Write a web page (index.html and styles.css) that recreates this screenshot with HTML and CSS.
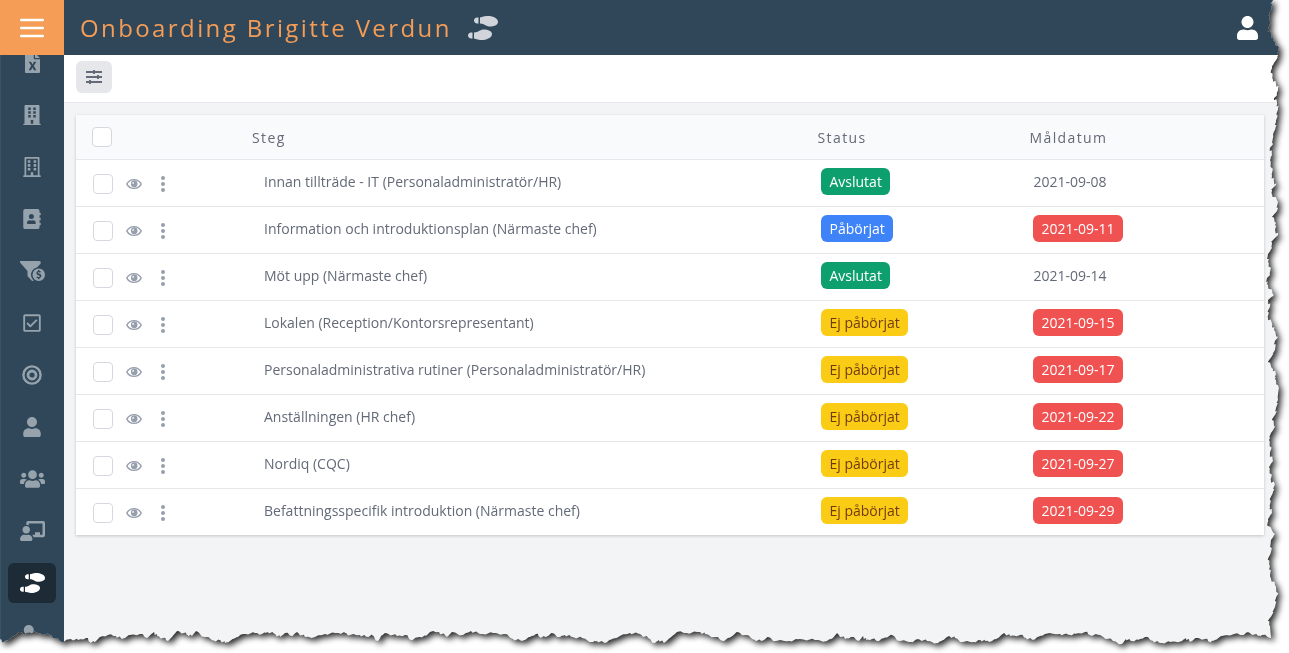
FILE: index.html
```html
<!DOCTYPE html>
<html lang="sv">
<head>
<meta charset="utf-8">
<title>Onboarding Brigitte Verdun</title>
<link rel="stylesheet" href="styles.css">
</head>
<body>
<svg class="defs" aria-hidden="true">
  <symbol id="shoes" viewBox="0 0 640 512"><path d="M192 160h32V32h-32c-35.35 0-64 28.65-64 64s28.65 64 64 64zM0 416c0 35.35 28.65 64 64 64h32V352H64c-35.35 0-64 28.65-64 64zm337.46-128c-34.91 0-76.16 13.12-104.73 32-24.79 16.38-44.52 32-104.73 32v128l57.53 15.97c26.21 7.28 53.01 13.12 80.31 15.05 32.69 2.31 65.6.67 97.58-6.2C472.9 481.3 512 429.22 512 384c0-64-84.18-96-174.54-96zM491.42 7.25C459.44.38 426.53-1.26 393.84 1.05c-27.3 1.93-54.1 7.77-80.31 15.05L256 32v128c60.2 0 79.94 15.62 104.73 32 28.57 18.88 69.82 32 104.73 32C555.82 224 640 192 640 128c0-45.22-39.1-97.3-148.58-120.75z"/></symbol>
  <symbol id="user" viewBox="0 0 448 512"><path d="M224 256c70.7 0 128-57.3 128-128S294.7 0 224 0 96 57.3 96 128s57.3 128 128 128zm89.6 32h-16.7c-22.2 10.2-46.9 16-72.9 16s-50.6-5.8-72.9-16h-16.7C60.2 288 0 348.2 0 422.4V464c0 26.5 21.5 48 48 48h352c26.5 0 48-21.5 48-48v-41.6c0-74.2-60.2-134.4-134.4-134.4z"/></symbol>
  <symbol id="eye" viewBox="0 0 576 512"><path fill-rule="evenodd" d="M572 241C518 135 410 72 288 72S58 135 4 241a32 32 0 0 0 0 30c54 106 162 169 284 169s230-63 284-169a32 32 0 0 0 0-30zM288 392c-98 0-184-50-234-136C104 170 190 120 288 120s184 50 234 136c-50 86-136 136-234 136zM296 128a122 122 0 1 0 0 244 122 122 0 0 0 0-244zM256 180a34 34 0 1 1-34 44 50 50 0 0 1 34-44z"/></symbol>
</svg>
<div class="sheet">
  <div class="page" id="page">
    <header class="topbar">
      <button class="menu" aria-label="Meny"><svg width="24" height="20" viewBox="0 0 24 20"><path d="M1 2h22M1 10h22M1 18h22" stroke="#fff" stroke-width="2.4" stroke-linecap="round"/></svg></button>
      <h1 class="title">Onboarding Brigitte Verdun</h1>
      <svg class="title-icon" width="30" height="24"><use href="#shoes"/></svg>
      <button class="account" aria-label="Konto"><svg width="21" height="24"><use href="#user"/></svg></button>
    </header>
    <div class="body">
      <nav class="sidebar" aria-label="Huvudmeny">
        <div class="items">
          <a class="item" href="#" aria-label="Export"><svg width="15" height="20" viewBox="0 0 384 512"><path fill-rule="evenodd" d="M224 136V0H24A24 24 0 0 0 0 24v464a24 24 0 0 0 24 24h336a24 24 0 0 0 24-24V160H248a24 24 0 0 1-24-24zM256 0v128h128zM95 224h58l39 68 39-68h58l-64 104 64 112h-58l-39-70-39 70H95l64-112z"/></svg></a>
          <a class="item" href="#" aria-label="Bolag"><svg width="18" height="20" viewBox="0 0 448 512"><path fill-rule="evenodd" d="M436 480h-20V24a24 24 0 0 0-24-24H56a24 24 0 0 0-24 24v456H12a12 12 0 0 0-12 12v20h448v-20a12 12 0 0 0-12-12zM128 64h64v64h-64zm0 96h64v64h-64zm0 96h64v64h-64zM256 64h64v64h-64zm0 96h64v64h-64zm0 96h64v64h-64zM192 384h64v96h-64z"/></svg></a>
          <a class="item" href="#" aria-label="Kontor"><svg width="18" height="20" viewBox="0 0 448 512"><path fill-rule="evenodd" d="M436 470h-20V24a24 24 0 0 0-24-24H56a24 24 0 0 0-24 24v446H12a12 12 0 0 0-12 12v30h448v-30a12 12 0 0 0-12-12zM76 44h296v426H256v-80h-64v80H76z"/><path d="M116 84h66v66h-66zm0 98h66v66h-66zm0 98h66v66h-66zM266 84h66v66h-66zm0 98h66v66h-66zm0 98h66v66h-66z"/></svg></a>
          <a class="item" href="#" aria-label="Kontakter"><svg width="18" height="20" viewBox="0 0 448 512"><path fill-rule="evenodd" d="M436 160a12 12 0 0 0 12-12v-40a12 12 0 0 0-12-12h-20V48a48 48 0 0 0-48-48H48A48 48 0 0 0 0 48v416a48 48 0 0 0 48 48h320a48 48 0 0 0 48-48v-48h20a12 12 0 0 0 12-12v-40a12 12 0 0 0-12-12h-20v-64h20a12 12 0 0 0 12-12v-40a12 12 0 0 0-12-12h-20v-64zM208 128a64 64 0 1 1 0 128 64 64 0 0 1 0-128zm112 237c0 10-10 19-22 19H118c-12 0-22-9-22-19v-19c0-32 30-58 67-58h5c28 11 52 11 80 0h5c37 0 67 26 67 58z"/></svg></a>
          <a class="item" href="#" aria-label="Försäljning"><svg width="25" height="20" viewBox="0 0 640 512"><path d="M433 166l87-91C547 47 527 0 488 0H24C-6 0-10 24 6 44l186 212v124a32 32 0 0 0 14 26l98 98c14 12 34 10 46-4a192 192 0 0 1 83-334z"/><path fill-rule="evenodd" d="M480 192a160 160 0 1 0 0 320 160 160 0 0 0 0-320zm-18 40h36v24c16 2 28 7 40 15l-20 28c-15-11-58-19-61 3-2 26 91 14 91 78 0 34-22 54-50 60v26h-36v-25c-18-2-34-9-47-20l22-27c19 17 70 23 73-2 4-32-90-17-90-78 0-28 17-50 42-57z"/></svg></a>
          <a class="item" href="#" aria-label="Uppgifter"><svg width="18" height="20" viewBox="0 0 448 512"><path fill-rule="evenodd" d="M400 32H48A48 48 0 0 0 0 80v352a48 48 0 0 0 48 48h352a48 48 0 0 0 48-48V80a48 48 0 0 0-48-48zm0 400H48V80h352zM364 191L191 363a16 16 0 0 1-20 0l-89-91 34-34 65 66 149-147z"/></svg></a>
          <a class="item" href="#" aria-label="Mål"><svg width="20" height="20" viewBox="0 0 20 20"><circle cx="10" cy="10" r="8.6" fill="none" stroke="currentColor" stroke-width="2.4"/><circle cx="10" cy="10" r="4" fill="none" stroke="currentColor" stroke-width="2.8"/></svg></a>
          <a class="item" href="#" aria-label="Person"><svg width="18" height="20"><use href="#user"/></svg></a>
          <a class="item" href="#" aria-label="Grupper"><svg width="25" height="20" viewBox="0 0 640 512"><path d="M96 224c35.3 0 64-28.7 64-64s-28.7-64-64-64-64 28.7-64 64 28.7 64 64 64zm448 0c35.3 0 64-28.7 64-64s-28.7-64-64-64-64 28.7-64 64 28.7 64 64 64zm32 32h-64c-17.6 0-33.5 7.1-45.1 18.6 40.3 22.1 68.9 62 75.1 109.4h66c17.7 0 32-14.3 32-32v-32c0-35.3-28.7-64-64-64zm-256 0c61.9 0 112-50.1 112-112S381.9 32 320 32 208 82.1 208 144s50.1 112 112 112zm76.8 32h-8.3c-20.8 10-43.9 16-68.5 16s-47.6-6-68.5-16h-8.3C179.6 288 128 339.6 128 403.2V432c0 26.5 21.5 48 48 48h288c26.5 0 48-21.5 48-48v-28.8c0-63.6-51.6-115.2-115.2-115.2zm-223.7-13.4C161.5 263.1 145.6 256 128 256H64c-35.3 0-64 28.7-64 64v32c0 17.7 14.3 32 32 32h65.9c6.3-47.4 34.9-87.3 75.2-109.4z"/></svg></a>
          <a class="item" href="#" aria-label="Utbildning"><svg width="25" height="20" viewBox="0 0 640 512"><path d="M208 352c-2.39 0-4.78.35-7.06 1.09C187.98 357.3 174.35 360 160 360c-14.35 0-27.98-2.7-40.95-6.91-2.28-.74-4.66-1.09-7.05-1.09C49.94 352-.33 402.48 0 464.62.14 490.88 21.73 512 48 512h224c26.27 0 47.86-21.12 48-47.38.33-62.14-49.94-112.62-112-112.62zm-48-32c53.02 0 96-42.98 96-96s-42.98-96-96-96-96 42.98-96 96 42.98 96 96 96zM592 0H208c-26.47 0-48 22.25-48 49.59V96c23.42 0 45.1 6.78 64 17.8V64h352v288h-64v-64H384v64h-76.24c19.1 16.69 33.12 38.73 39.69 64H592c26.47 0 48-22.25 48-49.59V49.59C640 22.25 618.47 0 592 0z"/></svg></a>
          <a class="item active" href="#" aria-label="Onboarding" aria-current="page"><svg width="25" height="20"><use href="#shoes"/></svg></a>
          <a class="item" href="#" aria-label="Roller"><svg width="25" height="20" viewBox="0 0 640 512"><circle cx="224" cy="128" r="128"/></svg></a>
        </div>
      </nav>
      <main class="content">
        <div class="toolbar">
          <button class="filter" aria-label="Filter"><svg width="16" height="14" viewBox="0 0 16 14"><path d="M0 2h16M0 7h16M0 12h16M8 0v4M12 5v4M4 10v4" fill="none" stroke="currentColor" stroke-width="1.9"/></svg></button>
        </div>
        <div class="list">
          <table class="table">
            <colgroup><col class="c-tools"><col class="c-step"><col class="c-status"><col></colgroup>
            <thead><tr><th><input class="check" type="checkbox" aria-label="Markera alla"></th><th>Steg</th><th>Status</th><th>Måldatum</th></tr></thead>
            <tbody id="rows"></tbody>
          </table>
        </div>
      </main>
    </div>
  </div>
</div>
<script src="app.js"></script>
</body>
</html>
```
FILE: styles.css
```css
* { box-sizing: border-box; }
body {
  margin: 0;
  background: #fff;
  color: #636a78;
  font-family: "Open Sans", "Noto Sans", sans-serif;
  font-size: 14px;
  line-height: 19px;
  overflow: hidden;
}
button { border: 0; padding: 0; background: none; color: inherit; font: inherit; cursor: pointer; display: flex; align-items: center; justify-content: center; }
svg { display: block; fill: currentColor; }
.defs { display: none; }

.sheet { filter: drop-shadow(3px 3px 3px rgba(0, 0, 0, 0.85)); }
.page { height: 100vh; display: flex; flex-direction: column; background: #f3f4f6; }

.topbar { flex: none; height: 55px; display: flex; align-items: center; background: #2f4759; padding-right: 31px; }
.menu { width: 64px; height: 55px; background: #f59c56; }
.title { margin: 0 16px; font-size: 24px; line-height: 34px; font-weight: 400; letter-spacing: 0.1em; color: #f59c56; white-space: nowrap; }
.title-icon { color: #d1d5db; }
.account { margin-left: auto; color: #fff; }

.body { flex: 1; min-height: 0; display: flex; }
.sidebar { flex: none; width: 64px; overflow: hidden; background: #2f4759; border-left: 1px solid #3c5364; }
.items { display: flex; flex-direction: column; gap: 12px; padding: 0 8px 0 7px; margin-top: -12px; }
.item { flex: none; height: 40px; display: flex; align-items: center; justify-content: center; border-radius: 6px; color: #97a3ac; }
.item.active { background: #1c2b35; color: #fff; }

.content { flex: 1; min-width: 0; }
.toolbar { height: 48px; padding: 6px 12px; background: #fff; border-bottom: 1px solid #e5e7eb; }
.filter { width: 36px; height: 32px; border-radius: 6px; background: #e5e7eb; }
.list { padding: 12px 25px 0 12px; }

.table { width: 100%; table-layout: fixed; border-collapse: separate; border-spacing: 0; background: #fff; box-shadow: 0 1px 3px rgba(0, 0, 0, 0.2); }
.c-tools { width: 160px; }
.c-step { width: 47.6%; }
.c-status { width: 212px; }
th { height: 45px; padding: 0 16px; text-align: left; font-weight: 400; letter-spacing: 0.1em; background: #f9fafb; border-bottom: 1px solid #e5e7eb; vertical-align: middle; }
td { height: 47px; padding: 8px 20px 0; vertical-align: top; border-bottom: 1px solid #e5e7eb; }
td:first-child { padding: 14px 0 0 17px; }
td:nth-child(2) { padding-left: 28px; }
tbody tr:last-child td { border-bottom: 0; height: 46px; }
.plain { display: inline-block; padding: 4px 0; }
.badge { display: inline-block; padding: 4px 8px; border-radius: 6px; color: #fff; }
.done { background: #0e9f6e; }
.started { background: #3f83f8; }
.waiting { background: #facc15; color: #713b12; }
.late { background: #f05252; }

.tools { display: flex; align-items: center; gap: 13px; color: #979fad; }
.check { appearance: none; display: block; flex: none; width: 20px; height: 20px; margin: 0; border: 1px solid #d5d9df; border-radius: 4px; background: #fff; }
.dots { width: 16px; }
```
FILE: app.js
```js
const steps = [
  ["Innan tillträde - IT (Personaladministratör/HR)", "Avslutat", "done", "2021-09-08", false],
  ["Information och introduktionsplan (Närmaste chef)", "Påbörjat", "started", "2021-09-11", true],
  ["Möt upp (Närmaste chef)", "Avslutat", "done", "2021-09-14", false],
  ["Lokalen (Reception/Kontorsrepresentant)", "Ej påbörjat", "waiting", "2021-09-15", true],
  ["Personaladministrativa rutiner (Personaladministratör/HR)", "Ej påbörjat", "waiting", "2021-09-17", true],
  ["Anställningen (HR chef)", "Ej påbörjat", "waiting", "2021-09-22", true],
  ["Nordiq (CQC)", "Ej påbörjat", "waiting", "2021-09-27", true],
  ["Befattningsspecifik introduktion (Närmaste chef)", "Ej påbörjat", "waiting", "2021-09-29", true]
];
document.getElementById("rows").innerHTML = steps.map(([name, status, kind, date, late]) => `
<tr>
  <td><div class="tools"><input class="check" type="checkbox" aria-label="Markera ${name}">
    <button aria-label="Visa"><svg width="16" height="14"><use href="#eye"/></svg></button>
    <button class="dots" aria-label="Fler val"><svg width="4" height="16" viewBox="0 0 4 16"><circle cx="2" cy="2" r="2"/><circle cx="2" cy="8" r="2"/><circle cx="2" cy="14" r="2"/></svg></button></div></td>
  <td><span class="plain">${name}</span></td>
  <td><span class="badge ${kind}">${status}</span></td>
  <td><span class="${late ? "badge late" : "plain"}">${date}</span></td>
</tr>`).join("");

// Torn paper outline: [distance from the right edge, y] and [x, distance from the bottom edge].
const right = [[16,0],[18,4],[17,8],[19,12],[20,18],[19,22],[21,30],[18,33],[16,40],[11,46],[11,55],[13,60],[17,66],[18,73],[16,80],[13,84],[11,88],[12,95],[15,98],[12,103],[11,108],[12,115],[13,122],[14,130],[16,134],[16,144],[19,148],[17,155],[19,160],[17,168],[17,176],[15,182],[13,185],[18,190],[17,194],[11,202],[12,211],[17,217],[13,223],[14,230],[11,235],[18,242],[17,248],[21,254],[21,262],[19,267],[19,275],[22,278],[22,284],[19,289],[15,295],[21,300],[19,306],[21,312],[21,318],[17,323],[15,330],[11,337],[14,341],[14,350],[17,356],[21,362],[16,369],[13,374],[14,379],[11,385],[11,400],[13,408],[13,413],[17,420],[14,427],[18,433],[20,440],[18,447],[19,454],[16,461],[20,467],[18,474],[18,481],[14,484],[16,492],[19,500],[19,507],[17,513],[21,519],[21,526],[14,534],[18,540],[18,552],[21,560],[19,566],[19,576],[14,585],[11,593],[13,598],[14,607],[17,615],[21,621],[19,626]];
const bottom = [[1271,15],[1262,18],[1258,17],[1248,21],[1243,18],[1234,19],[1222,17],[1213,12],[1210,11],[1205,14],[1196,15],[1190,11],[1186,15],[1182,12],[1170,11],[1160,10],[1153,12],[1145,16],[1138,13],[1131,12],[1126,14],[1122,9],[1113,12],[1100,18],[1090,18],[1085,21],[1075,19],[1070,18],[1060,19],[1045,19],[1038,16],[1033,13],[1026,15],[1020,18],[1010,17],[1004,20],[998,15],[992,12],[985,12],[980,13],[975,11],[963,11],[955,15],[949,17],[943,13],[938,10],[927,12],[918,14],[912,11],[900,12],[892,18],[884,15],[878,12],[872,14],[866,13],[863,17],[859,12],[851,16],[845,14],[837,20],[833,15],[827,12],[815,13],[800,14],[790,12],[776,12],[768,16],[762,12],[755,13],[745,18],[737,21],[731,16],[723,12],[715,16],[705,19],[700,21],[687,20],[677,21],[670,15],[664,10],[659,13],[655,10],[648,15],[640,19],[630,20],[620,17],[610,13],[605,10],[597,12],[593,11],[582,15],[572,16],[565,18],[560,16],[552,20],[546,16],[540,16],[536,19],[530,16],[522,12],[513,14],[504,19],[493,20],[480,19],[471,22],[463,18],[452,21],[447,16],[439,21],[430,21],[426,17],[419,16],[411,13],[405,18],[397,17],[386,20],[382,18],[378,12],[372,18],[367,16],[360,18],[350,18],[345,20],[338,20],[325,19],[315,16],[305,16],[297,21],[292,17],[285,20],[280,16],[275,19],[268,21],[262,19],[255,20],[243,19],[237,16],[230,12],[225,10],[220,13],[215,12],[205,16],[196,22],[192,17],[188,18],[184,20],[177,22],[172,16],[168,12],[163,15],[157,17],[154,21],[147,15],[140,19],[130,18],[122,14],[116,17],[108,18],[100,16],[95,11],[90,11],[86,15],[78,13],[70,14],[62,11],[55,15],[50,18],[38,20],[30,21],[25,19],[20,21],[14,17],[8,13],[4,11],[0,14]];

// Small teeth between neighbouring points give the edge its rough grain.
function roughen(points) {
  const out = [];
  points.forEach((p, i) => {
    out.push(p);
    const q = points[i + 1];
    if (!q) return;
    for (let k = 1; k < 4; k++) {
      const n = ((i * 7 + k * 5) % 4 - 1.5) * 0.6;
      out.push([p[0] + (q[0] - p[0]) * k / 4 + n, p[1] + (q[1] - p[1]) * k / 4 + n]);
    }
  });
  return out;
}
const page = document.getElementById("page");
function tear() {
  const w = page.clientWidth, h = page.clientHeight;
  const side = roughen(right).map(([x, y]) => `${w - x}px ${y * h / 653}px`);
  const foot = roughen(bottom).map(([x, y]) => `${x * w / 1289}px ${h - y}px`);
  page.style.clipPath = `polygon(0 0, ${side.concat(foot).join(", ")})`;
}
tear();
addEventListener("resize", tear);
```
